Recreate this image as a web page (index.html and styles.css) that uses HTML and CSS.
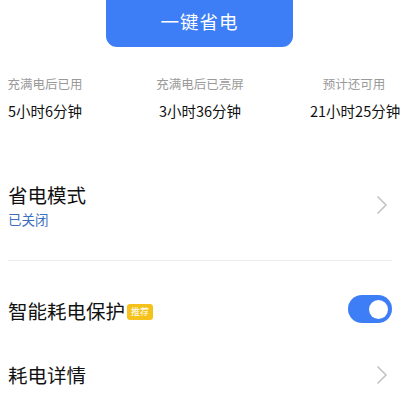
FILE: index.html
```html
<!DOCTYPE html>
<html lang="zh-CN">
<head>
    <meta charset="UTF-8">
    <meta name="viewport" content="width=device-width, initial-scale=1.0">
    <title>省电</title>
    <link rel="stylesheet" href="styles.css">
</head>
<body>
    <div class="page">
        <div class="hero">
            <button class="save-btn">一键省电</button>
        </div>

        <div class="stats">
            <div class="stat">
                <div class="stat-label">充满电后已用</div>
                <div class="stat-value">5小时6分钟</div>
            </div>
            <div class="stat">
                <div class="stat-label">充满电后已亮屏</div>
                <div class="stat-value">3小时36分钟</div>
            </div>
            <div class="stat">
                <div class="stat-label">预计还可用</div>
                <div class="stat-value">21小时25分钟</div>
            </div>
        </div>

        <div class="row row-mode">
            <div>
                <div class="row-title">省电模式</div>
                <div class="row-sub">已关闭</div>
            </div>
            <svg class="chevron" width="12" height="20" viewBox="0 0 12 20">
                <polyline points="1.5,1.5 10,10 1.5,18.5" fill="none" stroke="#c4c4c4" stroke-width="1.6"/>
            </svg>
        </div>

        <div class="divider"></div>

        <div class="row">
            <div class="row-title">智能耗电保护<span class="badge">推荐</span></div>
            <div class="switch on"><span class="knob"></span></div>
        </div>

        <div class="row">
            <div class="row-title">耗电详情</div>
            <svg class="chevron" width="12" height="20" viewBox="0 0 12 20">
                <polyline points="1.5,1.5 10,10 1.5,18.5" fill="none" stroke="#c4c4c4" stroke-width="1.6"/>
            </svg>
        </div>
    </div>
</body>
</html>
```

FILE: styles.css
```css
/* General Styles */
body {
    margin: 0;
    background-color: #fff;
    font-family: "Noto Sans CJK SC", "Noto Sans", sans-serif;
    color: #111;
    overflow: hidden;
}

.page {
    padding: 0 8px;
}

/* Top button */
.hero {
    display: flex;
    justify-content: center;
}

.save-btn {
    margin-top: -10px;
    margin-left: -1px;
    width: 187px;
    height: 57px;
    padding-top: 6px;
    border: none;
    border-radius: 11px;
    background-color: #3d7ef6;
    color: #fff;
    font-family: inherit;
    font-size: 18.5px;
    letter-spacing: 1px;
}

/* Battery stats */
.stats {
    display: grid;
    grid-template-columns: 90px 220px 88px;
    margin: 28px -8px 0;
}

.stat {
    text-align: center;
    white-space: nowrap;
}

.stat-label {
    font-size: 12.5px;
    line-height: 18px;
    color: #9a9a9a;
}

.stat-value {
    margin-top: 8px;
    font-size: 14.5px;
    line-height: 20px;
    color: #111;
}

/* List rows */
.row {
    display: flex;
    align-items: center;
    justify-content: space-between;
    height: 64px;
}

.row-mode {
    height: auto;
    margin-top: 61px;
}

.row-title {
    display: flex;
    align-items: center;
    font-size: 19.5px;
    line-height: 26px;
}

.row-sub {
    margin-top: 2px;
    font-size: 13.5px;
    line-height: 18px;
    color: #3b6fbf;
}

.chevron {
    margin-right: 4px;
}

.divider {
    height: 1px;
    margin-top: 32px;
    margin-bottom: 18px;
    background-color: #ececec;
}

.badge {
    display: inline-block;
    margin-left: 2px;
    margin-top: 2px;
    padding: 0 4px;
    height: 16px;
    line-height: 16px;
    font-size: 9px;
    border-radius: 3px;
    background-color: #f5c21b;
    color: #fff;
}

/* Toggle switch */
.switch {
    display: flex;
    align-items: center;
    justify-content: flex-end;
    width: 44px;
    height: 28px;
    margin-top: -4px;
    padding: 0 4px;
    box-sizing: border-box;
    border-radius: 14px;
    background-color: #3d7ef6;
}

.knob {
    width: 19px;
    height: 19px;
    border-radius: 50%;
    background-color: #fff;
}
```
